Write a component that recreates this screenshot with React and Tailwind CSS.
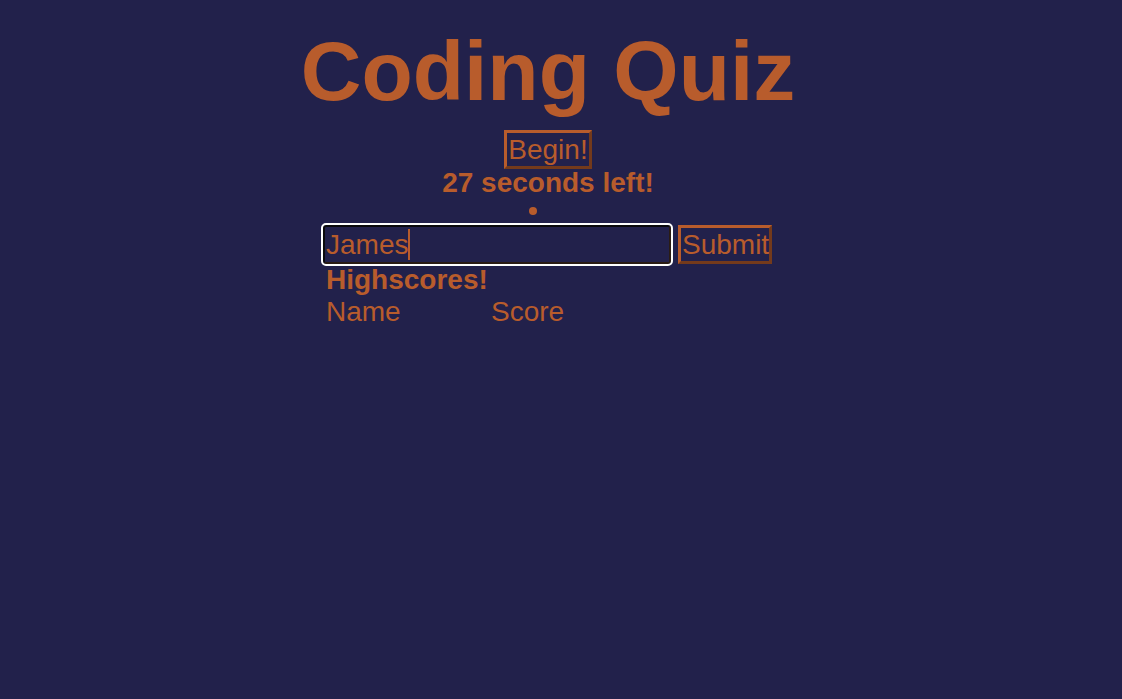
import { useState } from 'react'

const orange = 'text-[#b85c2c]'

export default function App() {
  const [name] = useState('James')
  const scores = []

  return (
    <div className="min-h-screen bg-[#22214b] font-['Liberation_Sans',Arial,sans-serif] text-[#b85c2c]">
      <div className="w-[480px] mx-auto pt-[29px]">
        <div className="w-[454px] flex flex-col items-center">
          <h1 className="text-[84px] leading-[84px] font-bold whitespace-nowrap">Coding Quiz</h1>

          <button className="mt-[17px] h-[39px] px-[1px] text-[28px] leading-none border-[3px] border-t-[#b85c2c] border-l-[#b85c2c] border-b-[#743a1b] border-r-[#743a1b]">
            Begin!
          </button>

          <p className="text-[28px] leading-[27px] font-bold">27 seconds left!</p>
        </div>

        <div className="h-[29px] flex items-center">
          <span className="ml-[208px] w-[8px] h-[8px] rounded-full bg-[#b85c2c]" />
        </div>

        <div className="flex items-center gap-[7px] pl-[2px]">
          <div className="w-[348px] h-[39px] flex items-center px-[1px] rounded-[3px] border-[2px] border-t-[#0a0a0c] border-l-[#0a0a0c] border-b-[#2a1c14] border-r-[#2a1c14] outline-2 outline-white outline-offset-0 text-[28px] leading-none">
            <span>{name}</span>
            <span className="w-[2px] h-[31px] bg-[#b85c2c]" />
          </div>
          <button className="h-[39px] w-[94px] px-[1px] text-[28px] leading-none border-[3px] border-t-[#b85c2c] border-l-[#b85c2c] border-b-[#743a1b] border-r-[#743a1b]">
            Submit
          </button>
        </div>

        <div className="pl-[5px]">
          <h2 className={`text-[28px] leading-[32px] font-bold ${orange}`}>Highscores!</h2>
          <div className="grid grid-cols-[165px_auto] text-[28px] leading-[32px]">
            <span>Name</span>
            <span>Score</span>
            {scores.map(s => (
              <span key={s.name}>{s.name}</span>
            ))}
          </div>
        </div>
      </div>
    </div>
  )
}
